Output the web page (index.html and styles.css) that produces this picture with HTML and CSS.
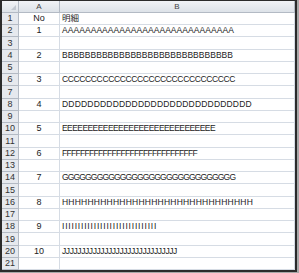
FILE: index.html
```
<!DOCTYPE html>
<html lang="ja">
<head>
<meta charset="utf-8">
<link rel="stylesheet" href="styles.css">
</head>
<body>
<div class="frame">
  <div class="sheet">
    <div class="corner"><span class="tri"></span></div>
    <div class="colhead">A</div>
    <div class="colhead">B</div>

    <div class="rowhead">1</div><div class="cell c">No</div><div class="cell">明細</div>
    <div class="rowhead">2</div><div class="cell c">1</div><div class="cell ls-a">AAAAAAAAAAAAAAAAAAAAAAAAAAAAAA</div>
    <div class="rowhead">3</div><div class="cell c"></div><div class="cell"></div>
    <div class="rowhead">4</div><div class="cell c">2</div><div class="cell ls-b">BBBBBBBBBBBBBBBBBBBBBBBBBBBBBB</div>
    <div class="rowhead">5</div><div class="cell c"></div><div class="cell"></div>
    <div class="rowhead">6</div><div class="cell c">3</div><div class="cell ls-c">CCCCCCCCCCCCCCCCCCCCCCCCCCCCCC</div>
    <div class="rowhead">7</div><div class="cell c"></div><div class="cell"></div>
    <div class="rowhead">8</div><div class="cell c">4</div><div class="cell ls-d">DDDDDDDDDDDDDDDDDDDDDDDDDDDDDD</div>
    <div class="rowhead">9</div><div class="cell c"></div><div class="cell"></div>
    <div class="rowhead">10</div><div class="cell c">5</div><div class="cell ls-e">EEEEEEEEEEEEEEEEEEEEEEEEEEEEEE</div>
    <div class="rowhead">11</div><div class="cell c"></div><div class="cell"></div>
    <div class="rowhead">12</div><div class="cell c">6</div><div class="cell ls-f">FFFFFFFFFFFFFFFFFFFFFFFFFFFFFF</div>
    <div class="rowhead">13</div><div class="cell c"></div><div class="cell"></div>
    <div class="rowhead">14</div><div class="cell c">7</div><div class="cell ls-g">GGGGGGGGGGGGGGGGGGGGGGGGGGGGGG</div>
    <div class="rowhead">15</div><div class="cell c"></div><div class="cell"></div>
    <div class="rowhead">16</div><div class="cell c">8</div><div class="cell ls-h">HHHHHHHHHHHHHHHHHHHHHHHHHHHHHH</div>
    <div class="rowhead">17</div><div class="cell c"></div><div class="cell"></div>
    <div class="rowhead">18</div><div class="cell c">9</div><div class="cell ls-i">IIIIIIIIIIIIIIIIIIIIIIIIIIIIII</div>
    <div class="rowhead">19</div><div class="cell c"></div><div class="cell"></div>
    <div class="rowhead">20</div><div class="cell c">10</div><div class="cell ls-j">JJJJJJJJJJJJJJJJJJJJJJJJJJJJJJ</div>
    <div class="rowhead">21</div><div class="cell c"></div><div class="cell"></div>
  </div>
</div>
</body>
</html>
```
FILE: styles.css
```
html, body {
  margin: 0;
  padding: 0;
}
body {
  width: 299px;
  height: 273px;
  background: #a8a8a8;
  overflow: hidden;
}
.frame {
  width: 297px;
  height: 272px;
  box-sizing: border-box;
  border-style: solid;
  border-color: #2b2b2b;
  border-width: 1px 2px 2px 2px;
  background: #fff;
}
.sheet {
  display: grid;
  grid-template-columns: 17px 41px 1fr;
  grid-template-rows: 12px repeat(21, 1fr);
  height: 100%;
  font-family: "Liberation Sans", "Noto Sans CJK JP", sans-serif;
  font-size: 8.5px;
  color: #222;
}
.corner, .colhead, .rowhead {
  background: linear-gradient(#f1f3f6, #dde2e8);
  border-right: 1px solid #b3bac4;
  border-bottom: 1px solid #b3bac4;
  box-sizing: border-box;
}
.corner {
  position: relative;
}
.tri {
  position: absolute;
  right: 2px;
  bottom: 2px;
  width: 0;
  height: 0;
  border-left: 5px solid transparent;
  border-bottom: 5px solid #c2c8d0;
}
.colhead {
  display: flex;
  align-items: center;
  justify-content: center;
  font-size: 8px;
  color: #444;
}
.rowhead {
  background: #e6e9ee;
  display: flex;
  align-items: flex-end;
  justify-content: center;
  padding-bottom: 1px;
  font-size: 9px;
  color: #333;
}
.cell {
  border-right: 1px solid #d6dce4;
  border-bottom: 1px solid #d6dce4;
  box-sizing: border-box;
  display: flex;
  align-items: flex-end;
  padding: 0 0 1px 2px;
  white-space: nowrap;
  overflow: hidden;
}
.cell.c {
  justify-content: center;
  padding-left: 0;
  font-size: 9px;
}
.ls-a { letter-spacing: 0.06px; }
.ls-b { letter-spacing: 0.03px; }
.ls-c { letter-spacing: -0.37px; }
.ls-d { letter-spacing: 0.19px; }
.ls-e { letter-spacing: -0.57px; }
.ls-f { letter-spacing: -0.69px; }
.ls-g { letter-spacing: -0.84px; }
.ls-h { letter-spacing: 0.23px; }
.ls-i { letter-spacing: 0.81px; }
.ls-j { letter-spacing: -0.42px; }
```
